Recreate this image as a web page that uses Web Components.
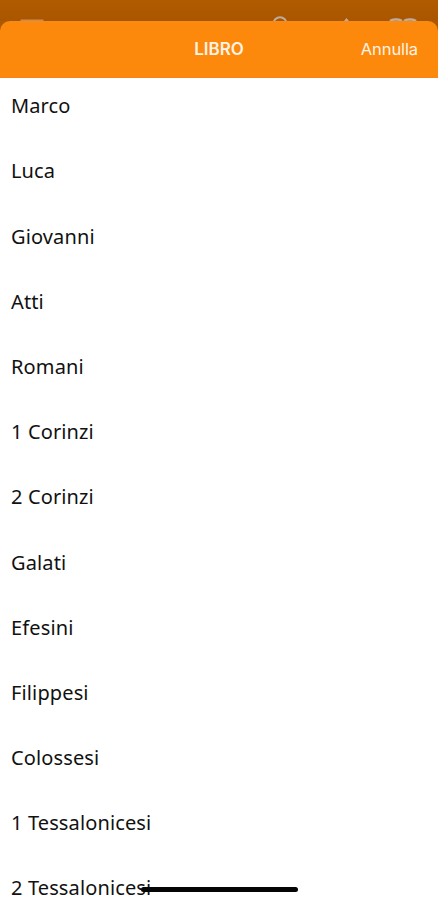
<!DOCTYPE html>
<html lang="it">
<head>
<meta charset="utf-8">
<title>Libro</title>
<style>
  body {
    margin: 0;
    height: 900px;
    overflow: hidden;
    background: #ae5900;
    font-family: "Noto Sans", "Open Sans", sans-serif;
  }
</style>
</head>
<body>
<book-picker>
  <app-toolbar slot="backdrop"></app-toolbar>
  <sheet-header slot="header">
    LIBRO
    <span slot="action">Annulla</span>
  </sheet-header>
  <book-row>Marco</book-row>
  <book-row>Luca</book-row>
  <book-row>Giovanni</book-row>
  <book-row>Atti</book-row>
  <book-row>Romani</book-row>
  <book-row>1 Corinzi</book-row>
  <book-row>2 Corinzi</book-row>
  <book-row>Galati</book-row>
  <book-row>Efesini</book-row>
  <book-row>Filippesi</book-row>
  <book-row>Colossesi</book-row>
  <book-row>1 Tessalonicesi</book-row>
  <book-row>2 Tessalonicesi</book-row>
</book-picker>

<script>
const define = (name, html) =>
  customElements.define(name, class extends HTMLElement {
    constructor() {
      super();
      const template = document.createElement('template');
      template.innerHTML = html;
      this.attachShadow({ mode: 'open' });
      this.shadowRoot.append(template.content.cloneNode(true));
    }
  });

// The dimmed toolbar of the page behind the sheet: only its top edge peeks out.
define('app-toolbar', /* html */`
<style>
  :host {
    display: block;
    height: 21px;
    background: linear-gradient(#b05b00, #aa5600);
  }
  svg { display: block; }
</style>
<svg width="438" height="21" viewBox="0 0 438 21" fill="none" stroke="#bdaca0" stroke-width="2">
  <path d="M20.5 20.5h23" stroke="#cf8b59"/>
  <circle cx="280" cy="23.5" r="6.3"/>
  <path d="M344.500 22l2-2.500 2 2.500"/>
  <path d="M390 21q2-1.500 5-1.500h2q3 0 5 1.500M404 21q2-1.500 5-1.500h2q3 0 5 1.500" stroke-width="2.500"/>
</svg>
`);

define('sheet-header', /* html */`
<style>
  :host {
    box-sizing: border-box;
    display: grid;
    grid-template-columns: 1fr auto 1fr;
    align-items: center;
    height: 57px;
    padding: 0 20px 1px;
    border-radius: 10px 10px 0 0;
    background: linear-gradient(#f98a14 1px, #fc890b 2px, #fc890b 55px, #f68510);
    color: #fff3e6;
    font-family: Inter, Roboto, sans-serif;
    font-size: 16.5px;
  }
  .title {
    grid-column: 2;
    font-size: 17px;
    font-weight: 600;
  }
  .action {
    justify-self: end;
    letter-spacing: -0.1px;
  }
</style>
<div class="title"><slot></slot></div>
<div class="action"><slot name="action"></slot></div>
`);

define('book-row', /* html */`
<style>
  :host {
    display: flex;
    align-items: center;
    flex: none;
    height: 65.2px;
    padding-left: 11px;
    color: #111;
    font-size: 20px;
    letter-spacing: 0.13px;
    line-height: 22px;
    white-space: nowrap;
  }
</style>
<span><slot></slot></span>
`);

define('book-picker', /* html */`
<style>
  :host {
    position: relative;
    display: flex;
    flex-direction: column;
    height: 900px;
    overflow: hidden;
  }
  .list {
    flex: 1;
    min-height: 0;
    overflow: hidden;
    background: #fff;
  }
  .rows {
    display: flex;
    flex-direction: column;
    margin-top: -4.4px;
  }
  .home-indicator {
    position: absolute;
    left: 141px;
    top: 887px;
    width: 157px;
    height: 5px;
    border-radius: 3px;
    background: #050505;
  }
</style>
<slot name="backdrop"></slot>
<slot name="header"></slot>
<div class="list">
  <div class="rows"><slot></slot></div>
</div>
<div class="home-indicator"></div>
`);
</script>
</body>
</html>
